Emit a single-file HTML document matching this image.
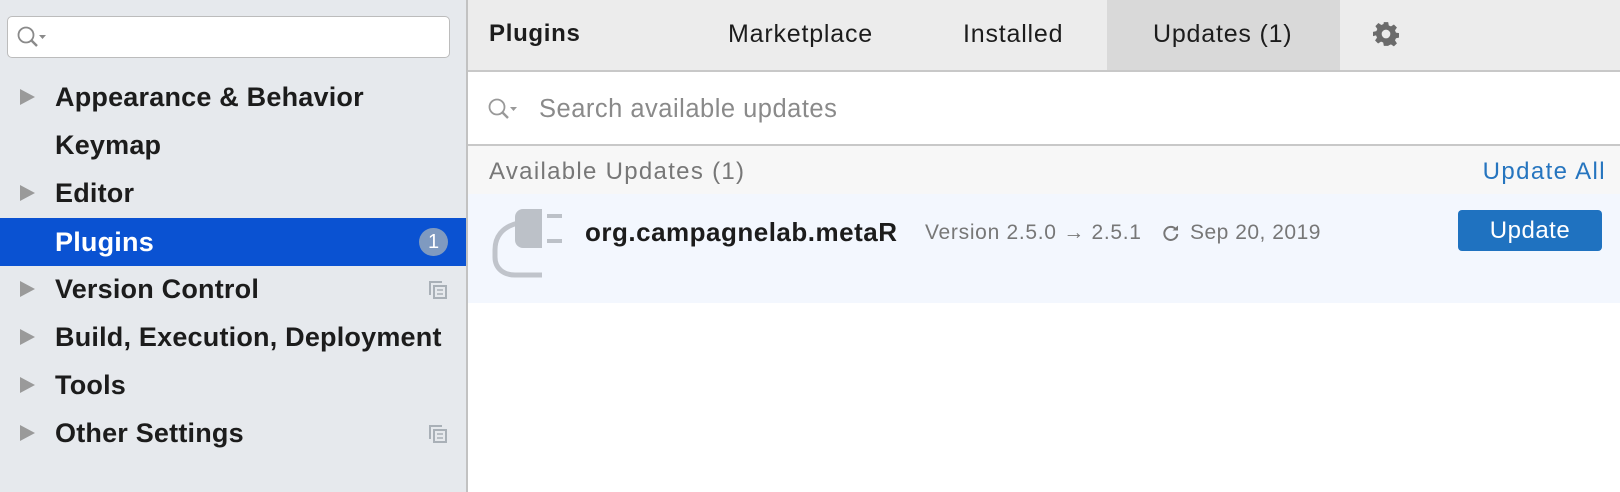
<!DOCTYPE html>
<html><head><meta charset="utf-8"><style>
*{margin:0;padding:0;box-sizing:border-box}
body{width:1620px;height:492px;overflow:hidden;font-family:"Liberation Sans",Helvetica,Arial,sans-serif;background:#fff;position:relative}
.abs{position:absolute;white-space:nowrap}
#side{left:0;top:0;width:466px;height:492px;background:#e6e9ed}
#div{left:466px;top:0;width:2px;height:492px;background:#c2c2c2}
.sb{left:7px;top:16px;width:443px;height:42px;background:#fff;border:1px solid #bcbcbc;border-radius:5px}
.item{position:absolute;left:0;width:466px;height:48px;font-weight:bold;font-size:27px;letter-spacing:0.2px;color:#1c1c1c;line-height:48px;padding-left:55px}
.tri{position:absolute;left:20px;top:16px;width:0;height:0;border-left:15px solid #9a9a9a;border-top:8px solid transparent;border-bottom:8px solid transparent}
.sel{background:#0a52d2;color:#fff}
.badge{position:absolute;left:419px;top:10px;width:29px;height:28px;border-radius:14px;background:#7f9ac0;color:#fff;font-size:20px;font-weight:normal;line-height:28px;text-align:center;padding:0;letter-spacing:0}
.cp{position:absolute;left:428px;top:15px}
.tab{font-size:25px;letter-spacing:0.8px;color:#1c1c1c;top:20px}
</style></head><body>
<div id="side" class="abs">
  <div class="sb abs"><svg class="abs" style="left:8px;top:8px" width="34" height="26"><circle cx="10" cy="10" r="7.5" fill="none" stroke="#8a8a8a" stroke-width="1.8"/><path d="M15 15l6 6" stroke="#8a8a8a" stroke-width="2.4"/><path d="M23 10h7l-3.5 4z" fill="#8a8a8a"/></svg></div>
  <div class="item" style="top:73px"><div class="tri"></div>Appearance &amp; Behavior</div>
  <div class="item" style="top:121px">Keymap</div>
  <div class="item" style="top:169px"><div class="tri"></div>Editor</div>
  <div class="item sel" style="top:218px">Plugins<div class="badge">1</div></div>
  <div class="item" style="top:265px"><div class="tri"></div>Version Control<svg class="cp" width="20" height="20"><path d="M2 15V2h12" fill="none" stroke="#a9b0b7" stroke-width="2"/><rect x="6" y="6" width="12" height="12" fill="none" stroke="#a9b0b7" stroke-width="2"/><path d="M9 10h6M9 14h6" stroke="#a9b0b7" stroke-width="1.6"/></svg></div>
  <div class="item" style="top:313px"><div class="tri"></div>Build, Execution, Deployment</div>
  <div class="item" style="top:361px"><div class="tri"></div>Tools</div>
  <div class="item" style="top:409px"><div class="tri"></div>Other Settings<svg class="cp" width="20" height="20"><path d="M2 15V2h12" fill="none" stroke="#a9b0b7" stroke-width="2"/><rect x="6" y="6" width="12" height="12" fill="none" stroke="#a9b0b7" stroke-width="2"/><path d="M9 10h6M9 14h6" stroke="#a9b0b7" stroke-width="1.6"/></svg></div>
</div>
<div id="div" class="abs"></div>

<div class="abs" style="left:468px;top:0;width:1152px;height:70px;background:#ececec"></div>
<div class="abs" style="left:1107px;top:0;width:233px;height:70px;background:#d9d9d9"></div>
<div class="abs" style="left:468px;top:70px;width:1152px;height:2px;background:#c8c8c8"></div>
<div class="abs" style="left:489px;top:20px;font-size:24px;letter-spacing:0.7px;font-weight:bold;color:#1c1c1c">Plugins</div>
<div class="abs tab" style="left:728px">Marketplace</div>
<div class="abs tab" style="left:963px">Installed</div>
<div class="abs tab" style="left:1153px">Updates (1)</div>
<svg class="abs" style="left:1373px;top:21px" width="26" height="26" viewBox="0 0 24 24"><path fill="#6b6b6b" d="M10 1h4l.6 3.1 2 .9 2.7-1.8 2.8 2.8-1.8 2.7.9 2 3.1.6v4l-3.1.6-.9 2 1.8 2.7-2.8 2.8-2.7-1.8-2 .9L14 23h-4l-.6-3.1-2-.9-2.7 1.8-2.8-2.8 1.8-2.7-.9-2L0 14v-4l3.1-.6.9-2-1.8-2.7 2.8-2.8 2.7 1.8 2-.9zM12 8a4 4 0 100 8 4 4 0 000-8z"/></svg>

<svg class="abs" style="left:487px;top:97px" width="34" height="26"><circle cx="10" cy="10" r="7.5" fill="none" stroke="#999" stroke-width="1.8"/><path d="M15 15l6 6" stroke="#999" stroke-width="2.4"/><path d="M23 10h7l-3.5 4z" fill="#999"/></svg>
<div class="abs" style="left:539px;top:95px;font-size:25.5px;letter-spacing:0.5px;color:#8a8a8a">Search available updates</div>
<div class="abs" style="left:468px;top:144px;width:1152px;height:2px;background:#c8c8c8"></div>
<div class="abs" style="left:468px;top:146px;width:1152px;height:48px;background:#f7f7f7"></div>
<div class="abs" style="left:489px;top:158px;font-size:24px;letter-spacing:1.3px;color:#777">Available Updates (1)</div>
<div class="abs" style="right:14px;top:158px;font-size:24px;letter-spacing:1.4px;color:#2675bf">Update All</div>
<div class="abs" style="left:468px;top:194px;width:1152px;height:109px;background:#f3f7fe"></div>
<svg class="abs" style="left:488px;top:205px" width="80" height="76"><path d="M30 18 C14 22 7 32 7 45 V52 C7 63 15 70 27 70 H54" fill="none" stroke="#c0c4cb" stroke-width="5"/><path d="M35 4h19v39h-19a8 8 0 01-8-8V12a8 8 0 018-8z" fill="#bcc1c8"/><rect x="59" y="9" width="15" height="4" fill="#bcc1c8"/><rect x="59" y="34" width="15" height="4" fill="#bcc1c8"/></svg>
<div class="abs" style="left:585px;top:217px;font-size:26px;letter-spacing:0.5px;font-weight:bold;color:#1c1c1c">org.campagnelab.metaR</div>
<div class="abs" style="left:925px;top:221px;font-size:21px;letter-spacing:0.7px;color:#777">Version 2.5.0 → 2.5.1</div>
<svg class="abs" style="left:1162px;top:224px" width="18" height="18" viewBox="0 0 18 18"><path d="M14 5.5A6.5 6.5 0 1015.3 10" fill="none" stroke="#777" stroke-width="2"/><path d="M10.5 4.5h5.5v-5z" fill="#777" transform="translate(0 2)"/></svg>
<div class="abs" style="left:1190px;top:221px;font-size:21px;letter-spacing:0.5px;color:#777">Sep 20, 2019</div>
<div class="abs" style="left:1458px;top:210px;width:144px;height:41px;background:#1f72c0;border-radius:4px;color:#fff;font-size:24px;letter-spacing:0.5px;text-align:center;line-height:41px">Update</div>
</body></html>
